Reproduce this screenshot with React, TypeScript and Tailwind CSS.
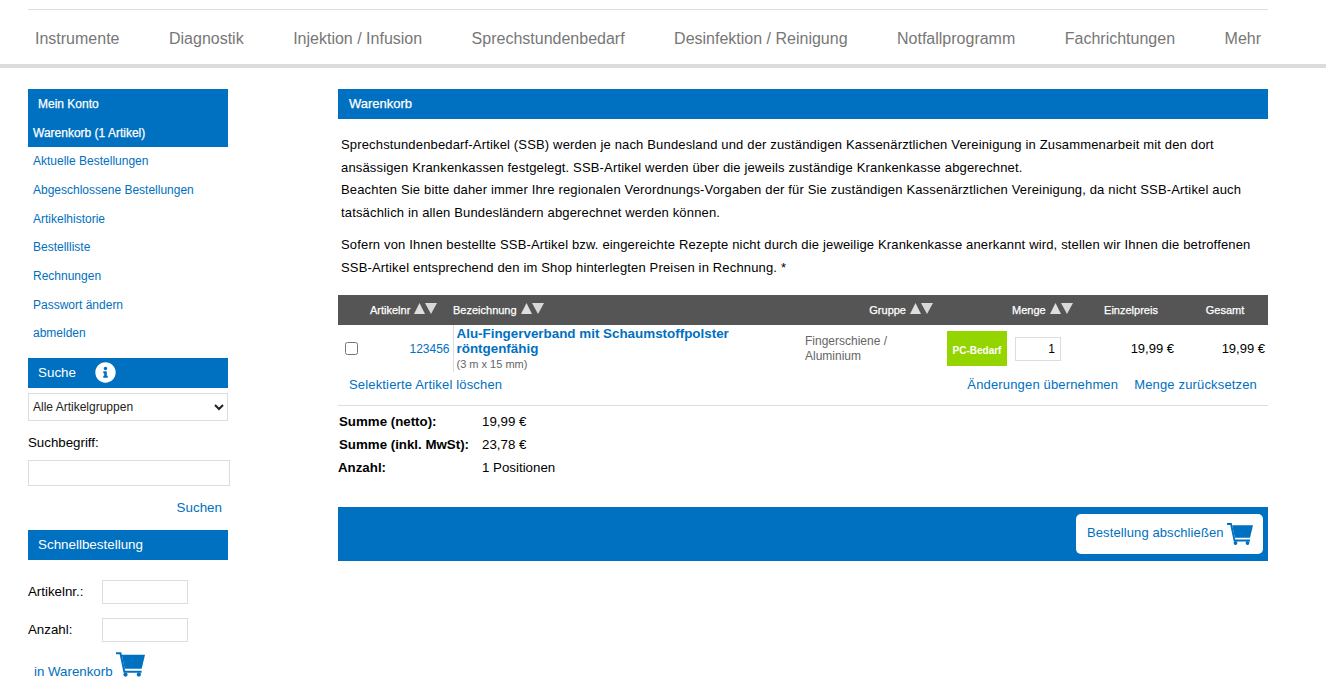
import { FaInfoCircle } from "react-icons/fa";

const navItems = ["Instrumente", "Diagnostik", "Injektion / Infusion", "Sprechstundenbedarf", "Desinfektion / Reinigung", "Notfallprogramm", "Fachrichtungen", "Mehr"];
const accountLinks = ["Aktuelle Bestellungen", "Abgeschlossene Bestellungen", "Artikelhistorie", "Bestellliste", "Rechnungen", "Passwort ändern", "abmelden"];

function CartIcon({ className }: { className: string }) {
    return (
        <svg viewBox="0 0 26 22" className={className} fill="currentColor">
            <path d="M0 1 H4 L7.5 17.5 H23" fill="none" stroke="currentColor" strokeWidth="1.8" />
            <path d="M5.2 2.2 H26 L23 14.8 H7.8 Z" />
            <circle cx="8.5" cy="20" r="1.9" />
            <circle cx="20.5" cy="20" r="1.9" />
        </svg>
    );
}

function SortArrows() {
    return (
        <svg width="23" height="13" viewBox="0 0 23 13" className="ml-[4px] mb-[3px] shrink-0">
            <path d="M0 12 L5.5 1 L11 12 Z" fill="#dedede" />
            <path d="M11 1 L23 1 L17 12 Z" fill="#d8d8d8" />
        </svg>
    );
}

function SortHeader({ label }: { label: string }) {
    return (
        <span className="inline-flex items-center">
            <span>{label}</span>
            <SortArrows />
        </span>
    );
}

export default function App() {
    return (
        <div className="min-h-[697px] bg-white text-black font-['Liberation_Sans',Arial,sans-serif] text-[12px] overflow-hidden">
            <header className="h-[68px] border-b-[4px] border-[#dcdcdc] pt-[9px]">
                <nav className="mx-[28px] w-[1240px] h-[55px] border-t border-[#dcdcdc] pt-[4px] flex items-center justify-between px-[7px] text-[16px] text-[#777777]">
                    {navItems.map((item) => (
                        <a key={item}>{item}</a>
                    ))}
                </nav>
            </header>

            <div className="flex w-[1240px] mx-[28px] pt-[21px] gap-[110px]">
                <aside className="w-[200px] shrink-0">
                    <div className="bg-[#0070c0] text-white h-[58px] [-webkit-text-stroke:0.25px_white]">
                        <div className="h-[29px] pl-[10px] flex items-center">Mein Konto</div>
                        <div className="h-[29px] pl-[5px] flex items-center">Warenkorb (1 Artikel)</div>
                    </div>
                    <ul className="text-[#0070c0]">
                        {accountLinks.map((link) => (
                            <li key={link} className="h-[28.7px] pl-[5px] flex items-center">{link}</li>
                        ))}
                    </ul>

                    <div className="mt-[10px] h-[30px] bg-[#0070c0] text-white text-[13.4px] pl-[10px] flex items-center">
                        Suche
                        <FaInfoCircle className="ml-[19px] text-[21px]" />
                    </div>
                    <select className="mt-[5px] block w-[200px] h-[28px] border border-[#dddddd] bg-white text-[12px] text-[#222222]">
                        <option>Alle Artikelgruppen</option>
                    </select>
                    <label className="block mt-[14px] h-[16px] text-[13.3px] leading-[16px]">Suchbegriff:</label>
                    <input className="block mt-[9px] w-[202px] h-[26px] border border-[#dddddd]" />
                    <div className="mt-[14px] h-[16px] leading-[16px] pr-[6px] text-right text-[13.4px] text-[#0070c0]">Suchen</div>

                    <div className="mt-[14px] h-[30px] bg-[#0070c0] text-white text-[13.4px] pl-[10px] flex items-center">Schnellbestellung</div>
                    <div className="mt-[20px] flex items-center h-[24px] text-[13.3px]">
                        <span className="w-[74px]">Artikelnr.:</span>
                        <input className="w-[86px] h-[24px] border border-[#dddddd]" />
                    </div>
                    <div className="mt-[14px] flex items-center h-[24px] text-[13.3px]">
                        <span className="w-[74px]">Anzahl:</span>
                        <input className="w-[86px] h-[24px] border border-[#dddddd]" />
                    </div>
                    <div className="mt-[10px] ml-[6px] flex items-end text-[13.3px] text-[#0070c0]">
                        <span className="leading-[16px] -mb-[3px]">in Warenkorb</span>
                        <CartIcon className="ml-[3px] w-[29px] h-[25px]" />
                    </div>
                </aside>

                <main className="w-[930px]">
                    <div className="h-[30px] bg-[#0070c0] text-white text-[13px] pl-[11px] flex items-center [-webkit-text-stroke:0.25px_white]">Warenkorb</div>
                    <div className="mt-[15px] px-[3px] text-[13px] leading-[22.7px] tracking-[0.16px]">
                        <p>
                            Sprechstundenbedarf-Artikel (SSB) werden je nach Bundesland und der zuständigen Kassenärztlichen Vereinigung in Zusammenarbeit mit den dort ansässigen Krankenkassen festgelegt. SSB-Artikel werden über die jeweils zuständige Krankenkasse abgerechnet.
                            <br />
                            Beachten Sie bitte daher immer Ihre regionalen Verordnungs-Vorgaben der für Sie zuständigen Kassenärztlichen Vereinigung, da nicht SSB-Artikel auch tatsächlich in allen Bundesländern abgerechnet werden können.
                        </p>
                        <p className="mt-[9px]">
                            Sofern von Ihnen bestellte SSB-Artikel bzw. eingereichte Rezepte nicht durch die jeweilige Krankenkasse anerkannt wird, stellen wir Ihnen die betroffenen SSB-Artikel entsprechend den im Shop hinterlegten Preisen in Rechnung. *
                        </p>
                    </div>

                    <table className="mt-[16px] w-[930px] table-fixed border-collapse">
                        <colgroup>
                            <col className="w-[28px]" />
                            <col className="w-[87px]" />
                            <col className="w-[347px]" />
                            <col className="w-[142px]" />
                            <col className="w-[70px]" />
                            <col className="w-[73px]" />
                            <col className="w-[92px]" />
                            <col className="w-[91px]" />
                        </colgroup>
                        <thead>
                            <tr className="h-[30px] bg-[#555555] text-white text-[11px] [-webkit-text-stroke:0.25px_white]">
                                <th />
                                <th className="pl-[4px] text-left font-normal"><SortHeader label="Artikelnr" /></th>
                                <th className="text-left font-normal"><SortHeader label="Bezeichnung" /></th>
                                <th className="pr-[9px] text-right font-normal"><SortHeader label="Gruppe" /></th>
                                <th />
                                <th className="text-left font-normal"><SortHeader label="Menge" /></th>
                                <th className="text-center font-normal">Einzelpreis</th>
                                <th className="pl-[5px] text-center font-normal">Gesamt</th>
                            </tr>
                        </thead>
                        <tbody>
                            <tr className="h-[47px]">
                                <td className="pl-[7px]"><input type="checkbox" className="block w-[13px] h-[13px]" /></td>
                                <td className="pr-[3px] text-right text-[12px] text-[#0070c0]">123456</td>
                                <td className="border-l border-[#dddddd] pl-[3px] align-top leading-none">
                                    <div className="pt-[1px] text-[13.4px] leading-[15px] font-bold text-[#0070c0]">Alu-Fingerverband mit Schaumstoffpolster<br />röntgenfähig</div>
                                    <div className="mt-[1px] text-[11px] leading-[14px] text-[#666666]">(3 m x 15 mm)</div>
                                </td>
                                <td className="pl-[5px] text-[12px] leading-[15px] text-[#666666]">Fingerschiene /<br />Aluminium</td>
                                <td className="pl-[5px]">
                                    <div className="w-[60px] h-[35px] pt-[3px] bg-[#94d500] text-white text-[10px] font-bold flex items-center justify-center">PC-Bedarf</div>
                                </td>
                                <td className="pl-[3px]">
                                    <input defaultValue="1" className="block w-[46px] h-[24px] border border-[#dddddd] pr-[5px] text-right text-[12px]" />
                                </td>
                                <td className="pr-[3px] text-right text-[13px]">19,99 €</td>
                                <td className="pr-[3px] text-right text-[13px]">19,99 €</td>
                            </tr>
                        </tbody>
                    </table>

                    <div className="h-[34px] border-b border-[#dddddd] pl-[11px] pr-[11px] pb-[8px] flex items-center text-[13px] text-[#0070c0] tracking-[0.16px]">
                        <a>Selektierte Artikel löschen</a>
                        <a className="ml-auto">Änderungen übernehmen</a>
                        <a className="ml-[16px]">Menge zurücksetzen</a>
                    </div>

                    <dl className="mt-[4px] grid grid-cols-[144px_1fr] text-[13.3px] auto-rows-[23px] items-center">
                        <dt className="pl-[1px] font-bold">Summe (netto):</dt>
                        <dd>19,99 €</dd>
                        <dt className="pl-[1px] font-bold">Summe (inkl. MwSt):</dt>
                        <dd>23,78 €</dd>
                        <dt className="font-bold">Anzahl:</dt>
                        <dd>1 Positionen</dd>
                    </dl>

                    <div className="mt-[28px] h-[54px] bg-[#0070c0] flex items-center justify-end pr-[5px]">
                        <button className="w-[187px] h-[40px] bg-white rounded-[5px] pl-[11px] flex items-center text-[13px] tracking-[0.1px] text-[#0070c0]">
                            <span className="mb-[2px]">Bestellung abschließen</span>
                            <CartIcon className="ml-[3px] w-[26px] h-[22px]" />
                        </button>
                    </div>
                </main>
            </div>
        </div>
    );
}
